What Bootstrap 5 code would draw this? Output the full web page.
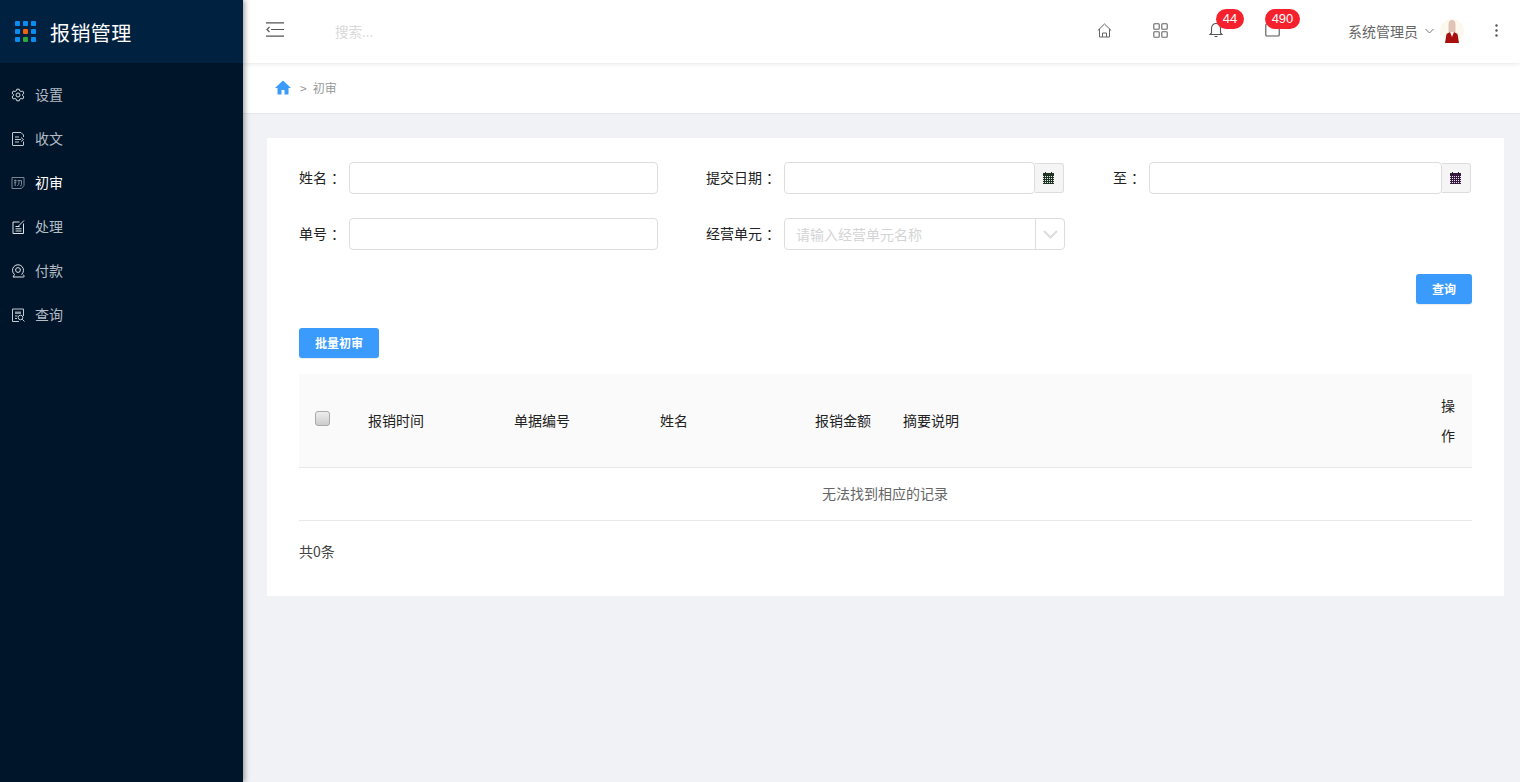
<!DOCTYPE html>
<html lang="zh-CN">
<head>
<meta charset="utf-8">
<title>报销管理</title>
<link href="https://cdn.jsdelivr.net/npm/bootstrap@5.3.0/dist/css/bootstrap.min.css" rel="stylesheet">
<style>
html,body{height:100%;overflow:hidden}
body{font-family:"Noto Sans CJK SC","Liberation Sans",sans-serif;font-size:14px;color:#333;background:#f0f2f5}
.app-shell{height:782px}
.side-bar{width:243px;flex:none;background:#001529;box-shadow:2px 0 5px rgba(0,0,0,.35);z-index:3}
.brand-box{height:63px;background:#002140;padding-left:15px;gap:14px;color:#fff;font-size:20px;letter-spacing:.4px}
.brand-box span{padding-top:2px}
.brand-grid{display:grid;grid-template-columns:repeat(3,5px);grid-auto-rows:5px;gap:3px}
.brand-grid i{display:block;background:#0a8cf0;border-radius:1px}
.brand-grid i.c-o{background:#f0640a}
.brand-grid i.c-g{background:#2ea836}
.side-menu{padding-top:9px}
.side-link{height:44px;padding-left:11px;gap:10px;color:#b4bcc6;text-decoration:none}
.side-link.is-on{color:#fff}
.side-link svg{width:14px;height:14px;flex:none;margin-top:1px}
.main-col{min-width:0}
.top-bar{height:63px;background:#fff;box-shadow:0 1px 4px rgba(0,0,0,.1);z-index:2;padding-left:23px}
.menu-toggle{margin-bottom:4px}
.search-ph{margin-left:51px;color:#d8d8d8;font-size:13.5px;width:180px}
.top-tools{margin-left:auto;margin-bottom:3px}
.tool-item{width:56px;height:40px;position:relative}
.tool-badge{position:absolute;top:-1px;height:20px;border-radius:10px;background:#f5222d;color:#fff;font-size:13px;line-height:20px;text-align:center;font-family:"Liberation Sans",sans-serif}
.badge-one{left:28px;width:28px}
.badge-two{left:21px;width:35px}
.user-box{margin-left:48px;font-size:14px;color:#666;margin-bottom:1px}
.chev-mark{margin-left:7px}
.ava-mark{margin-left:6px}
.more-dots{margin-left:31px;margin-right:22px;margin-bottom:3px}
.crumb-bar{height:51px;background:#fff;border-bottom:1px solid #e4e6ec;padding:0 0 1px 32px;font-size:12px;color:#999}
.crumb-home{margin-right:9px}
.crumb-sep{margin-right:6px}
.page-wrap{padding:24px 16px 0 24px}
.panel-box{background:#fff;height:458px;padding:24px 32px 0;color:#222}
.form-line{height:32px;margin-bottom:24px;width:1173px}
.form-line>span{padding-bottom:2px}
.colon-mark{margin-left:4px}
.lab-a{width:50px}.lab-b{width:78px;margin-left:48px}.lab-c{width:36px;margin-left:49px}
.inp-box{height:32px;border:1px solid #ddd;border-radius:4px;background:#fff;flex:none}
.w-a{width:309px}.w-b{width:251px}.w-c{width:293px}
.cal-box{width:29px;height:30px;background:#f5f5f5;border:1px solid #ddd;border-left:0;border-radius:0 3px 3px 0;flex:none;padding-right:2px}
.sel-box{width:281px;color:#d4d4d4;padding-left:11px}
.sel-arrow{width:29px;height:100%;border-left:1px solid #ddd;margin-left:auto;flex:none}
.act-btn{background:#3a9bfc;color:#fff;font-weight:700;font-size:12px;border:0;border-radius:3px;height:30px;padding:0;box-shadow:0 1px 1px rgba(0,0,0,.08)}
.act-btn:hover{background:#3a9bfc;color:#fff}
.btn-q{width:56px;display:block;margin-left:auto;margin-right:0}
.q-line{width:1173px;height:30px;margin-bottom:24px}
.btn-b{width:80px;display:block}
.data-tbl{width:1173px;table-layout:fixed;margin:16px 0 0;border-collapse:collapse;font-size:14px;color:#222}
.data-tbl th{background:#fafafa;font-weight:400;height:93px;padding:0;vertical-align:middle;border-bottom:1px solid #e8e8e8}
.data-tbl td{height:53px;text-align:center;color:#666;border-bottom:1px solid #e8e8e8;padding:0 1px 0 0;vertical-align:middle}
.fake-chk{display:block;width:15px;height:15px;margin-left:16px;border:1px solid #aaa;border-radius:3px;background:linear-gradient(#eee,#ccc);margin-top:-4px}
.data-tbl th.op-col{text-align:center;line-height:30px;padding-left:4px}
.total-line{margin-top:20px;color:#444}
</style>
</head>
<body>
<div class="app-shell d-flex">
  <aside class="side-bar d-flex flex-column">
    <div class="brand-box d-flex align-items-center">
      <div class="brand-grid"><i></i><i></i><i></i><i></i><i class="c-o"></i><i></i><i></i><i class="c-g"></i><i></i></div>
      <span>报销管理</span>
    </div>
    <nav class="side-menu d-flex flex-column">
      <a class="side-link d-flex align-items-center" href="#"><svg viewBox="0 0 14 14" fill="none" stroke="#d8dce2" stroke-width="1"><path d="M5.800 1.200h2.400l.4 1.500 1.500.8 1.600-.5 1.200 2.100-1.200 1.100v1.600l1.200 1.100-1.200 2.100-1.600-.5-1.500.8-.4 1.500H5.800l-.4-1.500-1.500-.8-1.600.5-1.200-2.100 1.200-1.100V6.200L1.100 5.100l1.200-2.100 1.600.5 1.500-.8z"/><circle cx="7" cy="7" r="2"/></svg><span>设置</span></a>
      <a class="side-link d-flex align-items-center" href="#"><svg viewBox="0 0 14 14" fill="none" stroke="#c4cad2" stroke-width="1"><path d="M12.500 5V3L10 .5H2Q1.500.5 1.500 1v12q0 .5.5.5h10q.5 0 .5-.5v-3.500"/><path d="M4 5h4M4 7.500h6M4 10h4M10 5.500l2.500 2-2.500 2"/></svg><span>收文</span></a>
      <a class="side-link is-on d-flex align-items-center" href="#"><svg viewBox="0 0 14 14" fill="none" stroke="#7c8796" stroke-width="1"><path d="M13 1.500H1v11h9.500l2.500-3z"/><path d="M3 4.500h2.500M4.200 3.500v6.500M3 7l2.500-1M6.500 4.500h4v4q0 1.500-1.500 1.500M8 4.500v2q0 2.500-1.800 3.500"/></svg><span>初审</span></a>
      <a class="side-link d-flex align-items-center" href="#"><svg viewBox="0 0 14 14" fill="none" stroke="#e0e4e8" stroke-width="1"><path d="M8.500 2H2v11.500h10.500V3.500"/><path d="M4.500 6.500h4M4.500 8.800h6M4.500 11h6M7.500 6l5.500-5.500"/></svg><span>处理</span></a>
      <a class="side-link d-flex align-items-center" href="#"><svg viewBox="0 0 14 14" fill="none" stroke="#e0e4e8" stroke-width="1"><path d="M3.500 10.500a5.500 5.500 0 1 1 7 0"/><circle cx="7" cy="6" r="2.400"/><path d="M2 13h10.500q1 0 .5-1.200L12 10.500M3.500 10.500L2 13"/></svg><span>付款</span></a>
      <a class="side-link d-flex align-items-center" href="#"><svg viewBox="0 0 14 14" fill="none" stroke="#c4cad2" stroke-width="1"><path d="M12.500 8V1H1.500v12.500h6.500"/><path d="M4 3.500h6v2.500H4z" fill="#8d97a4" stroke="none"/><path d="M4 8h2.500M4 10.500h2"/><circle cx="9.500" cy="9.500" r="2.300"/><path d="M11.200 11.200l2.300 2.300"/></svg><span>查询</span></a>
    </nav>
  </aside>
  <div class="main-col flex-grow-1 d-flex flex-column">
    <header class="top-bar d-flex align-items-center">
      <svg class="menu-toggle" width="18" height="15" viewBox="0 0 18 15" fill="none" stroke="#555" stroke-width="1.200"><path d="M0 .8h18M5 7.500h13M0 14.200h18M3.500 5L1 7.500 3.500 10"/></svg>
      <div class="search-ph">搜索...</div>
      <div class="top-tools d-flex align-items-center">
        <div class="tool-item d-flex align-items-center justify-content-center"><svg width="15" height="15" viewBox="0 0 15 15" fill="none" stroke="#666" stroke-width="1"><path d="M.8 7.500L7.500 1l6.700 6.500M2.500 6v8h10V6M5.500 14v-4h4v4"/></svg></div>
        <div class="tool-item d-flex align-items-center justify-content-center"><svg width="15" height="15" viewBox="0 0 15 15" fill="none" stroke="#666" stroke-width="1.100"><rect x=".8" y=".8" width="5.400" height="5.400" rx=".8"/><rect x="8.800" y=".8" width="5.400" height="5.400" rx=".8"/><rect x=".8" y="8.800" width="5.400" height="5.400" rx=".8"/><rect x="8.800" y="8.800" width="5.400" height="5.400" rx=".8"/></svg></div>
        <div class="tool-item d-flex align-items-center justify-content-center"><svg width="14" height="16" viewBox="0 0 14 16" fill="none" stroke="#555" stroke-width="1.100"><path d="M1 12.500h12l-1.500-1.500V6a4.500 4.500 0 0 0-9 0v5zM5.500 14.500h3"/></svg><span class="tool-badge badge-one">44</span></div>
        <div class="tool-item d-flex align-items-center justify-content-center"><svg width="15" height="15" viewBox="0 0 15 15" fill="none" stroke="#555" stroke-width="1.100"><rect x=".8" y="1" width="13.400" height="12" rx="1"/></svg><span class="tool-badge badge-two">490</span></div>
      </div>
      <div class="user-box d-flex align-items-center">
        <span>系统管理员</span>
        <svg class="chev-mark" width="9" height="6" viewBox="0 0 9 6" fill="none" stroke="#777" stroke-width="1"><path d="M.5 1l4 4 4-4"/></svg>
        <svg class="ava-mark" width="24" height="24" viewBox="0 0 24 24"><circle cx="12" cy="12" r="12" fill="#fdf8ee"/><path d="M8.500 13V6q0-5 3.500-5t3.500 5v7z" fill="#e0c4b8"/><path d="M5 24l1.500-9 3.500-2 2 5 2-5 3.500 2L19 24z" fill="#a80f0f"/></svg>
      </div>
      <svg class="more-dots" width="3" height="13" viewBox="0 0 3 13" fill="#555"><circle cx="1.500" cy="1.500" r="1.200"/><circle cx="1.500" cy="6.500" r="1.200"/><circle cx="1.500" cy="11.500" r="1.200"/></svg>
    </header>
    <div class="crumb-bar d-flex align-items-center">
      <svg class="crumb-home" width="16" height="15" viewBox="0 0 16 15" fill="#3a9bfc"><path d="M8 .5L16 8h-2.500v6.500H9.500V10h-3v4.500h-4V8H0z"/></svg>
      <span class="crumb-sep">&gt;</span><span>初审</span>
    </div>
    <main class="page-wrap">
      <section class="panel-box">
        <div class="form-line d-flex align-items-center">
          <span class="lab-a">姓名<span class="colon-mark">：</span></span><div class="inp-box w-a"></div>
          <span class="lab-b">提交日期<span class="colon-mark">：</span></span><div class="inp-box w-b"></div>
          <div class="cal-box d-flex align-items-center justify-content-center"><svg width="11" height="12" viewBox="0 0 11 12" shape-rendering="crispEdges"><path d="M0 1h11v11H0z" fill="#1f3324"/><path d="M2 0h1v1H2zM8 0h1v1H8z" fill="#1f3324"/><path d="M0 4.500h11M0 6.500h11M0 8.500h11M0 10.500h11" stroke="#e4e8e4" stroke-dasharray="1 1"/></svg></div>
          <span class="lab-c">至<span class="colon-mark">：</span></span><div class="inp-box w-c"></div>
          <div class="cal-box d-flex align-items-center justify-content-center"><svg width="11" height="12" viewBox="0 0 11 12" shape-rendering="crispEdges"><path d="M0 1h11v11H0z" fill="#361a3e"/><path d="M2 0h1v1H2zM8 0h1v1H8z" fill="#361a3e"/><path d="M0 4.500h11M0 6.500h11M0 8.500h11M0 10.500h11" stroke="#e8e0ea" stroke-dasharray="1 1"/></svg></div>
        </div>
        <div class="form-line d-flex align-items-center">
          <span class="lab-a">单号<span class="colon-mark">：</span></span><div class="inp-box w-a"></div>
          <span class="lab-b">经营单元<span class="colon-mark">：</span></span>
          <div class="inp-box sel-box d-flex align-items-center"><span>请输入经营单元名称</span><div class="sel-arrow d-flex align-items-center justify-content-center"><svg width="15" height="9" viewBox="0 0 15 9" fill="none" stroke="#ddd" stroke-width="2"><path d="M1 1l6.500 6.500L14 1"/></svg></div></div>
        </div>
        <div class="q-line"><button class="btn act-btn btn-q" type="button">查询</button></div>
        <button class="btn act-btn btn-b" type="button">批量初审</button>
        <table class="data-tbl">
          <colgroup><col style="width:69px"><col style="width:146px"><col style="width:146px"><col style="width:155px"><col style="width:88px"><col><col style="width:52px"></colgroup>
          <thead><tr><th><span class="fake-chk"></span></th><th>报销时间</th><th>单据编号</th><th>姓名</th><th>报销金额</th><th>摘要说明</th><th class="op-col">操<br>作</th></tr></thead>
          <tbody><tr><td colspan="7">无法找到相应的记录</td></tr></tbody>
        </table>
        <div class="total-line">共0条</div>
      </section>
    </main>
  </div>
</div>
<script src="https://cdn.jsdelivr.net/npm/bootstrap@5.3.0/dist/js/bootstrap.bundle.min.js"></script>
</body>
</html>
